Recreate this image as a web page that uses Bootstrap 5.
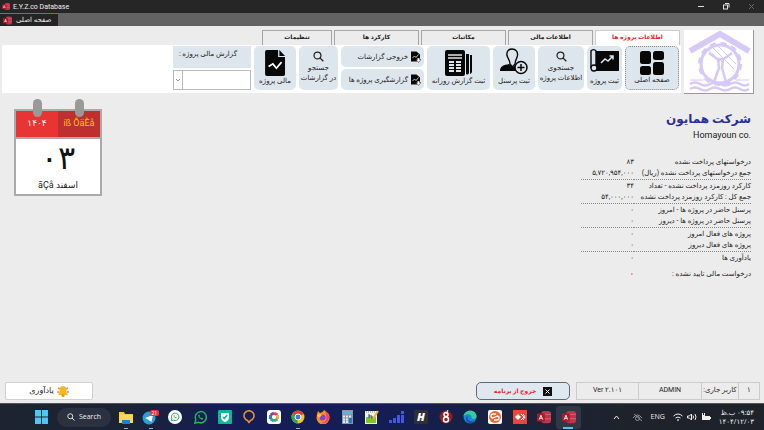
<!DOCTYPE html>
<html lang="fa">
<head>
<meta charset="utf-8">
<meta name="viewport" content="width=device-width, initial-scale=1">
<title>E.Y.Z.co Database</title>
<link rel="stylesheet" href="https://cdn.jsdelivr.net/npm/bootstrap@5.3.0/dist/css/bootstrap.min.css">
<style>
body{font-family:Roboto,"Open Sans","DejaVu Sans",sans-serif;font-size:7px;line-height:12px;background:#ececec;color:#222}
svg{display:block;flex:none}
button{font:inherit;color:inherit}
.titlebar{height:13px;background:#262626;color:#eee;padding-left:2px;gap:3px}
.tabstrip{height:13px;background:#636363}
.doc-tab{width:58px;background:#242424;color:#eee;border:0;border-top:1px solid #d8434a;padding:0 3px}
.win-btn{width:25px;height:13px;background:none;border:0;padding:0}
.ribbon{padding:4px 10px 0 2px;gap:3px}
.ribbon-tabs{height:15px;gap:2px;padding-right:1px}
.ribbon-tab{width:85px;border:1px solid #a5a5a5;border-bottom:0;background:#ececec;font-weight:700;font-size:6px;line-height:10px;padding:0 0 3px}
.ribbon-tab.first-tab{width:70px}
.ribbon-tab.active{background:#fff;color:#ee1c25;border-color:#ccc}
.ribbon-body{background:#fff;height:48px;padding:1px 2px 3px;gap:3px}
.tile{background:#dee6ed;border:0;border-radius:5px;padding:0;white-space:nowrap;line-height:10px;color:#222}
.tile.selected{border:1px dotted #888}
.tile-lens{margin:1px 0}
.w-home{width:54px}.w-proj{width:35px}.w-search{width:46px}.w-staff{width:42px}.w-daily{width:63px}
.w-stack{width:83px}.w-find{width:39px}.w-fin{width:42px}.w-report{width:78px}
.stack-tile{height:21px;padding:0 3px;gap:3px}
.report-label{background:#dee6ed;height:22px;padding:3px 14px 0 0;line-height:10px}
.report-select{height:20px;border:1px solid #bbb;border-radius:0;background:#fff;padding:0;appearance:none;width:100%;font-size:7px}
.select-arrow{position:absolute;left:0;bottom:0;width:10px;height:20px;border:1px solid #bbb;background:#fff;pointer-events:none}
.logo-box{width:70px;height:64px;background:#fff;border-right:1px solid #999;border-bottom:1px solid #999}
.cal{position:relative;width:88px;margin:15px 0 0 14px;border:2px solid #aaa;background:#fff}
.cal-head{height:28px;font-size:9px;line-height:24px;border-bottom:2px solid #aaa}
.cal-year{background:#e93434;color:#fff}
.cal-day{background:#bd302f;color:#ffc400}
.cal-num{font-size:32px;line-height:38px;height:37px;color:#111}
.cal-month{font-size:9px;line-height:18px;height:18px}
.ring{position:absolute;top:-12px;width:9px;height:18px;border-radius:5px;background:#999}
.ring-l{left:17px}.ring-r{left:59px}
.company{padding:15px 13px 0 0}
.company h1{font-size:12px;line-height:20px;font-weight:700;color:#2b2f9c;margin:0}
.company-en{font-size:9px;line-height:12px;margin:0 0 15px}
.stats{width:170px;border-collapse:separate;border-spacing:0}
.stats th{font-weight:400;padding:0;width:117px;white-space:nowrap;height:12px}
.stats td{padding:0;white-space:nowrap}
.stats .ruled>*{border-bottom:1px dotted #888;line-height:11px}
.stats .apart>*{padding-top:4px}
.footbar{padding:0 4px 3px 5px;gap:6px}
.foot-btn{height:18px;border:1px solid #d0d0d0;border-radius:2px;background:#fff;padding:0;gap:3px;width:88px;font-size:8px}
.exit-btn{width:94px;border:1px solid #5d6b77;border-radius:5px;background:#dfe7f0;color:#ee1c25;font-weight:700;font-size:6px;gap:7px}
.status{height:18px;border:1px solid #ccc;line-height:15px}
.status>div+div{border-right:1px solid #ccc}
.s1{width:20px}.s2{width:37px}.s3{width:63px}.s4{width:62px}
.taskbar{font-family:"Open Sans","DejaVu Sans",sans-serif;height:27px;color:#eee;background:linear-gradient(90deg,#1d2430 0,#1a2338 18%,#141d57 30%,#141d55 50%,#1a2338 70%,#1e232b 82%);padding:0 10px 0 33px;border-top:1px solid #555}
.task-search{width:54px;height:19px;border-radius:10px;background:#2b313f;gap:4px;border:0;color:#eee;padding:0;margin:0 3px 0 8px}
.apps{width:467px}
.task-btn{flex:1 1 0;height:23px;border:0;padding:0;background:none;border-radius:3px;position:relative}
.task-btn.current{background:#303746}
.running::after{content:"";position:absolute;left:10px;bottom:0;width:4px;height:1px;background:#aaa}
.task-btn.current::after{left:7px;width:10px;height:2px;background:#4cc2ff}
.tray{gap:4px}
.clock{line-height:9px}
</style>
<script src="https://cdn.jsdelivr.net/npm/bootstrap@5.3.0/dist/js/bootstrap.bundle.min.js"></script>
</head>
<body class="d-flex flex-column min-vh-100">
<svg width="0" height="0" class="position-absolute" aria-hidden="true">
<symbol id="access" viewBox="0 0 16 16"><rect x="5" y="1" width="11" height="14" rx="3" fill="#c4314b"/><path d="M6 5h10M6 10h10" stroke="#e06578"/><rect y="4" width="9" height="9" rx="1" fill="#a51d2d"/><path d="M2.500 11l2-5 2 5M3.500 9.500h2" stroke="#fff" fill="none"/></symbol>
<symbol id="lens" viewBox="0 0 16 16"><circle cx="6.500" cy="6.500" r="5" fill="none" stroke="currentColor" stroke-width="1.800"/><path d="M10 10l5 5" stroke="currentColor" stroke-width="2"/></symbol>
<symbol id="filechart" viewBox="0 0 24 30"><path d="M2 0h13v8h8v20a2 2 0 0 1-2 2H2a2 2 0 0 1-2-2V2a2 2 0 0 1 2-2z" fill="#080808"/><path d="M16.500 0l6.500 7h-6.500z" fill="#080808"/><path d="M4 19l5-3 4 5 6-7" fill="none" stroke="#fff" stroke-width="2"/></symbol>
<symbol id="export" viewBox="0 0 20 22"><path d="M0 0h11l7 6v7h-6v7H0z" fill="#080808"/><path d="M3 13l4-4 3 3 5-6" fill="none" stroke="#fff" stroke-width="1.500"/><path d="M13 13h4v3h3l-5 6-5-6h3z" fill="#fff" stroke="#080808"/></symbol>
<symbol id="phone" viewBox="0 0 16 16"><path d="M2 14l1-3.500A6 6 0 1 1 5.500 13z" fill="none" stroke="currentColor" stroke-width="1.600"/><path d="M6 5c-1 1 0 3 2 4.500 1.500 1 3 .5 3-.5L9.500 8l-1 .7L7 7l.5-1L6.700 4.700z" fill="currentColor"/></symbol>
</svg>

<header class="titlebar d-flex align-items-center">
<svg width="8" height="9"><use href="#access"/></svg><span>E.Y.Z.co Database</span>
<div class="ms-auto d-flex">
<button class="win-btn" aria-label="Minimize"><svg class="mx-auto" width="7" height="7"><path d="M0 3.500h6" stroke="#ddd"/></svg></button>
<button class="win-btn" aria-label="Restore"><svg class="mx-auto" width="7" height="7"><rect x=".5" y="2" width="4" height="4" fill="none" stroke="#ddd"/><path d="M2 .5h4v4" fill="none" stroke="#ddd"/></svg></button>
<button class="win-btn" aria-label="Close"><svg class="mx-auto" width="7" height="7"><path d="M1 1l5 5M6 1l-5 5" stroke="#666"/></svg></button>
</div>
</header>
<div class="tabstrip d-flex">
<button class="doc-tab d-flex align-items-center gap-1 text-nowrap"><svg width="9" height="9"><use href="#access"/></svg><span dir="rtl">صفحه اصلی</span></button>
</div>

<section class="ribbon d-flex" dir="ltr">
<div class="flex-grow-1">
<div class="ribbon-tabs d-flex justify-content-end">
<button class="ribbon-tab first-tab">تنظیمات</button>
<button class="ribbon-tab">کارکرد ها</button>
<button class="ribbon-tab">مکاتبات</button>
<button class="ribbon-tab">اطلاعات مالی</button>
<button class="ribbon-tab active">اطلاعات پروژه ها</button>
</div>
<div class="ribbon-body d-flex justify-content-end">
<div class="w-report position-relative d-flex flex-column justify-content-between">
<label for="report" class="report-label" dir="rtl">گزارش مالی پروژه :</label>
<select id="report" class="report-select"><option></option></select>
<span class="select-arrow d-flex align-items-center justify-content-center"><svg width="6" height="4"><path d="M1 1l2 2 2-2" fill="none" stroke="#999"/></svg></span>
</div>
<button class="tile w-fin d-flex flex-column align-items-center justify-content-between pt-1 pb-1"><svg width="21" height="26"><use href="#filechart"/></svg><span>مالی پروژه</span></button>
<button class="tile w-find d-flex flex-column align-items-center pt-1"><svg class="tile-lens" width="11" height="11"><use href="#lens"/></svg><span>جستجو<br>در گزارشات</span></button>
<div class="w-stack d-flex flex-column justify-content-between" dir="rtl">
<button class="tile stack-tile d-flex align-items-center"><svg width="10" height="12"><use href="#export"/></svg><span>خروجی گزارشات</span></button>
<button class="tile stack-tile d-flex align-items-center"><svg width="10" height="12"><use href="#export"/></svg><span>گزارشگیری پروژه ها</span></button>
</div>
<button class="tile w-daily d-flex flex-column align-items-center justify-content-between pt-1 pb-1"><svg width="28" height="26" viewBox="0 0 28 26"><rect width="20" height="26" rx="2" fill="#080808"/><path d="M3 5h14M3 8h14" stroke="#dee6ed" stroke-width="1.500"/><path d="M4 12h5M4 15h5M4 18h5M4 21h5M11 12h5M11 15h5M11 18h5M11 21h5" stroke="#dee6ed" stroke-width="2"/><path d="M21 4h3v19a2 2 0 0 1-3 1zM25 5h2v17a3 3 0 0 1-2 2z" fill="#080808"/></svg><span>ثبت گزارش روزانه</span></button>
<button class="tile w-staff d-flex flex-column align-items-center justify-content-between pb-1"><svg width="28" height="29" viewBox="0 0 28 29"><path d="M0 25c0-5 4-6 9-7l4 3 4-3 6 3-4 4z" fill="#080808"/><path d="M12 3c4 0 6 3 5.500 6.500C17 13 15 14 15 18l-2.500 3L10 18c0-4-2-5-3-8.500C6.500 6 8 3 12 3z" fill="#dee6ed" stroke="#080808" stroke-width="1.400"/><circle cx="21" cy="21.500" r="6" fill="#dee6ed" stroke="#080808" stroke-width="1.500"/><path d="M17.500 21.500h7M21 18v7" stroke="#080808" stroke-width="1.500"/></svg><span>ثبت پرسنل</span></button>
<button class="tile w-search d-flex flex-column align-items-center pt-1"><svg class="tile-lens" width="11" height="11"><use href="#lens"/></svg><span>جستجوی<br>اطلاعات پروژه</span></button>
<button class="tile w-proj d-flex flex-column align-items-center justify-content-between pb-1"><svg width="29" height="27" viewBox="0 0 29 27"><path d="M6 5h23v20H4z" fill="#080808"/><path d="M1 22V5a3 3 0 0 1 5 0v15" fill="#dee6ed" stroke="#080808" stroke-width="1.400"/><circle cx="4" cy="22" r="3" fill="#dee6ed" stroke="#080808" stroke-width="1.400"/><path d="M11 17l4-4 3 2 5-5M19.500 10H23v3.500" fill="none" stroke="#dee6ed" stroke-width="1.500"/></svg><span>ثبت پروژه</span></button>
<button class="tile selected w-home d-flex flex-column align-items-center justify-content-between pt-1 pb-1"><svg width="25" height="24" viewBox="0 0 25 24" fill="#080808"><rect width="11" height="13" rx="2.500"/><rect x="13" width="11" height="9" rx="2.500"/><rect y="15" width="11" height="9" rx="2.500"/><rect x="13" y="11" width="11" height="13" rx="2.500"/></svg><span>صفحه اصلی</span></button>
</div>
</div>
<div class="logo-box"><svg width="69" height="62" viewBox="0 0 69 62" fill="none" stroke="#d6c9f7"><path d="M6 21L36 4l29 17" stroke-width="6"/><circle cx="36" cy="34" r="19" stroke-width="3"/><circle cx="36" cy="34" r="21" stroke-width="2" stroke-dasharray="6 5"/><path d="M20 50H6M52 50h13" stroke-width="1"/><path d="M34 29h5l-1 9 4 14M34 29l1 9-5 14M25 23l11 8M48 23l-11 8" stroke-width="2.500"/><path d="M28 17l22 22M34 16l18 18M24 20l10 9" stroke-width="1"/><path d="M6 54q5-3 10 0t10 0 10 0 10 0 10 0 9 0M6 59q5-3 10 0t10 0 10 0 10 0 10 0 9 0" stroke-width="2.500"/></svg></div>
</section>

<main class="flex-grow-1 d-flex justify-content-between align-items-start">
<div class="cal text-center">
<span class="ring ring-l"></span><span class="ring ring-r"></span>
<div class="cal-head d-flex"><div class="cal-year w-50">۱۴۰۴</div><div class="cal-day w-50">íß ÔäÈå</div></div>
<div class="cal-num">۰۳</div>
<div class="cal-month" dir="ltr">ãÇå اسفند</div>
</div>
<section class="company" dir="rtl">
<h1>شرکت همایون</h1>
<p class="company-en"><bdi dir="ltr">Homayoun co.</bdi></p>
<table class="stats">
<tbody>
<tr><th scope="row">درخواستهای پرداخت نشده</th><td>۸۳</td></tr>
<tr class="ruled"><th scope="row">جمع درخواستهای پرداخت نشده (ریال)</th><td>۵,۷۲۰,۹۵۴,۰۰۰</td></tr>
<tr><th scope="row">کارکرد روزمزد پرداخت نشده - تعداد</th><td>۳۴</td></tr>
<tr class="ruled"><th scope="row">جمع کل : کارکرد روزمزد پرداخت نشده</th><td>۵۴,۰۰۰,۰۰۰</td></tr>
<tr><th scope="row">پرسنل حاضر در پروژه ها - امروز</th><td>۰</td></tr>
<tr class="ruled"><th scope="row">پرسنل حاضر در پروژه ها - دیروز</th><td>۰</td></tr>
<tr><th scope="row">پروژه های فعال امروز</th><td>۰</td></tr>
<tr class="ruled"><th scope="row">پروژه های فعال دیروز</th><td>۰</td></tr>
<tr><th scope="row">یادآوری ها</th><td>۰</td></tr>
<tr class="apart"><th scope="row">درخواست مالی تایید نشده :</th><td class="text-danger fw-bold">۰</td></tr>
</tbody>
</table>
</section>
</main>

<div class="footbar d-flex align-items-center" dir="ltr">
<button class="foot-btn d-flex align-items-center justify-content-center me-auto" dir="rtl"><svg width="12" height="11" viewBox="0 0 12 11"><path d="M1 2l2 1M11 2L9 3M0 6h2M12 6h-2" stroke="#e9837b" stroke-width="1.500"/><path d="M6 0c3 0 3.500 3 3.500 6L11 9H1l1.500-3C2.500 3 3 0 6 0z" fill="#f6b71b"/><circle cx="6" cy="9.500" r="1.500" fill="#e79b0b"/></svg>یادآوری</button>
<button class="foot-btn exit-btn d-flex align-items-center justify-content-center" dir="rtl"><svg width="9" height="9"><rect width="9" height="9" fill="#111"/><path d="M2.500 2.500l4 4M6.500 2.500l-4 4" stroke="#fff"/></svg>خروج از برنامه</button>
<div class="status d-flex text-center text-nowrap" dir="rtl"><div class="s1">۱</div><div class="s2">کاربر جاری:</div><div class="s3">ADMIN</div><div class="s4" dir="ltr">Ver ۲.۱۰۱</div></div>
</div>

<footer class="taskbar d-flex align-items-center">
<button class="task-btn flex-grow-0" aria-label="Start"><svg width="16" height="14" viewBox="0 0 16 14" fill="#4cc8f7"><path d="M2 0h6v6.500H2zM9 0h6v6.500H9zM2 7.500h6V14H2zM9 7.500h6V14H9z"/></svg></button>
<button class="task-search d-flex align-items-center justify-content-center"><svg width="8" height="8"><use href="#lens"/></svg>Search</button>
<nav class="apps d-flex" aria-label="Apps">
<button class="task-btn running" aria-label="Files"><svg class="mx-auto" width="14" height="13" viewBox="0 0 14 13"><path d="M0 1h5l1 2h8v9H0z" fill="#f7c948"/><path d="M0 4h14v8H0z" fill="#ffd65c"/><path d="M3 9h8v4H3z" fill="#1f7fd1"/></svg></button>
<button class="task-btn running" aria-label="Telegram"><svg class="mx-auto" width="17" height="15" viewBox="0 0 17 15"><circle cx="7" cy="8" r="6.500" fill="#2a9fdb"/><path d="M3 8l8-3-1.500 7-3-2z" fill="#fff"/><rect x="8" width="9" height="6" rx="2" fill="#e5383b"/><text x="9.500" y="5" font-size="5" fill="#fff">21</text></svg></button>
<button class="task-btn" aria-label="WhatsApp Business"><svg class="mx-auto" width="14" height="14" color="#27b15b"><circle cx="7" cy="7" r="7" fill="#fff"/><use href="#phone" x="2" y="2" width="10" height="10"/></svg></button>
<button class="task-btn" aria-label="WhatsApp"><svg class="mx-auto" width="15" height="15" color="#22b35b"><use href="#phone"/></svg></button>
<button class="task-btn" aria-label="Protection"><svg class="mx-auto" width="14" height="14"><rect width="14" height="14" rx="1" fill="#12b594"/><path d="M3 3h8v4q0 4-4 5-4-1-4-5z" fill="#fff"/><path d="M5 7l1.500 1.500L9 5" fill="none" stroke="#12b594" stroke-width="1.500"/></svg></button>
<button class="task-btn" aria-label="Maps"><svg class="mx-auto" width="12" height="14"><path d="M4.500 10.500a5 5 0 1 1 3 0L6 12.500z" fill="none" stroke="#e8962a" stroke-width="1.500"/></svg></button>
<button class="task-btn" aria-label="Camera"><svg class="mx-auto" width="14" height="14" fill="none" stroke-width="3"><rect width="14" height="14" rx="3" fill="#fff"/><path d="M7 3l3.500 2" stroke="#e44"/><path d="M10.500 5v4" stroke="#f9b233"/><path d="M10.500 9L7 11" stroke="#49b65b"/><path d="M7 11L3.500 9" stroke="#26a6a0"/><path d="M3.500 9V5" stroke="#317fd0"/><path d="M3.500 5L7 3" stroke="#8543a7"/></svg></button>
<button class="task-btn running" aria-label="Chrome"><svg class="mx-auto" width="14" height="14"><circle cx="7" cy="7" r="6.500" fill="#fbc116"/><path d="M7 7L1.400 3.700A6.500 6.500 0 0 1 12.600 4z" fill="#e33b2e"/><path d="M7 7L1.400 3.700A6.500 6.500 0 0 0 6.500 13.500z" fill="#2da94f"/><circle cx="7" cy="7" r="3" fill="#3b7ded" stroke="#fff"/></svg></button>
<button class="task-btn" aria-label="Firefox"><svg class="mx-auto" width="14" height="14"><path d="M1 4l1-3 2 2c2-1 3-1 4-3 3 2 6 4 5.500 8A6.500 6.500 0 0 1 .5 8z" fill="#ff8b25"/><path d="M9 1c4 3 4 5 4 7a6 6 0 0 1-8 5c7-1 6-7 4-12z" fill="#ff3c64"/><circle cx="6.500" cy="7.500" r="3" fill="#8045d5"/><path d="M1 5q3-2 5 0l-3 3z" fill="#ffc13b"/></svg></button>
<button class="task-btn" aria-label="Calculator"><svg class="mx-auto" width="11" height="14"><rect width="11" height="14" fill="#8797a5"/><rect x="1" y="1" width="9" height="3" fill="#4db8ea"/><path d="M1 6.500h9M1 9.500h9M1 12h9" stroke="#e6edf2" stroke-width="2" stroke-dasharray="2 1"/><rect x="7" y="8" width="3" height="5" fill="#207dbd"/></svg></button>
<button class="task-btn" aria-label="Editor"><svg class="mx-auto" width="14" height="14"><rect y="1" width="12" height="13" fill="#eef2e7"/><rect x="1" y="7" width="10" height="6" fill="#7ac62b"/><path d="M1 2h10" stroke="#888" stroke-dasharray="1 1"/><path d="M4 4v4M4 6h3v3" stroke="#444" fill="none"/><path d="M13 1L8 9" stroke="#e7b631" stroke-width="2"/></svg></button>
<button class="task-btn" aria-label="Metrics"><svg class="mx-auto" width="15" height="14" fill="#4459d9"><path d="M0 10h3v3H0zM4 8h3v5H4zM8 5h3v8H8zM12 5h3v8h-3zM12 1h3v3h-3z"/></svg></button>
<button class="task-btn" aria-label="H"><svg class="mx-auto" width="14" height="14"><rect width="14" height="14" rx="1" fill="#2e3035"/><text x="3" y="11" font-size="11" font-weight="800" font-style="italic" fill="#fff">H</text></svg></button>
<button class="task-btn" aria-label="Player"><svg class="mx-auto" width="14" height="14"><circle cx="7" cy="7" r="6.500" fill="#8d2025"/><circle cx="7" cy="4.500" r="2" fill="none" stroke="#fff" stroke-width="1.500"/><circle cx="7" cy="9.500" r="2.500" fill="none" stroke="#fff" stroke-width="1.500"/><path d="M9 0L7 4" stroke="#fff"/></svg></button>
<button class="task-btn" aria-label="Edge"><svg class="mx-auto" width="14" height="14"><circle cx="7" cy="7" r="6.500" fill="#1688d6"/><path d="M.5 6C2-1 13-1 13.500 6c0 4-5 3-5 2 1-4-5-5-8-2z" fill="#3acb9c"/><path d="M5 6c-2 4 2 6 7 5-3 4-9 2-9-2 0-2 1-3 2-3z" fill="#1554a5"/></svg></button>
<button class="task-btn" aria-label="Link"><svg class="mx-auto" width="14" height="14"><rect width="14" height="14" rx="2" fill="#fff"/><circle cx="7" cy="7" r="6" fill="#f0652b"/><path d="M5 8a2 2 0 0 1 0-4h3M9 6a2 2 0 0 1 0 4H6M5 8l4-2" fill="none" stroke="#fff" stroke-width="1.300"/></svg></button>
<button class="task-btn" aria-label="AnyDesk"><svg class="mx-auto" width="14" height="14"><rect width="14" height="14" fill="#ef443b"/><path d="M5 4l3 3-3 3-3-3z" fill="#fff"/><path d="M8 4l3 3-3 3M10 4l2 3-2 3" fill="none" stroke="#fff"/></svg></button>
<button class="task-btn" aria-label="Access"><svg class="mx-auto" width="14" height="14"><use href="#access"/></svg></button>
<button class="task-btn running current" aria-label="Access, database"><svg class="mx-auto" width="14" height="14"><use href="#access"/></svg></button>
</nav>
<div class="tray d-flex align-items-center ms-auto">
<svg class="me-2" width="7" height="5"><path d="M1 4l2.500-3L6 4" fill="none" stroke="#eee"/></svg>
<svg class="me-1" width="11" height="9" fill="none" stroke="#8c929d"><path d="M1 5q4.500-6 9 0M2 1l8 7"/><circle cx="5.500" cy="5.500" r="2"/></svg>
<span class="me-1">ENG</span>
<svg width="10" height="8" fill="none" stroke="#eee"><path d="M.5 3q4.500-4 9 0M2.500 5q2.500-2 5 0"/><circle cx="5" cy="7" r=".5"/></svg>
<svg width="10" height="8" fill="none" stroke="#eee"><path d="M.5 3h2l2-2v6l-2-2h-2zM6 2.500q1 1.500 0 3M8 1q2 3 0 6"/></svg>
<svg width="10" height="8" fill="#eee"><path d="M1 3h8v4H1zM9 4h1v2H9zM1 0h1v2h1V0h1v3H1z"/></svg>
<div class="clock text-end text-nowrap ms-1" dir="ltr"><div><bdi dir="rtl">۰۹:۵۴ ب.ظ</bdi></div><div>۱۴۰۴/۱۲/۰۳</div></div>
</div>
</footer>
</body>
</html>
